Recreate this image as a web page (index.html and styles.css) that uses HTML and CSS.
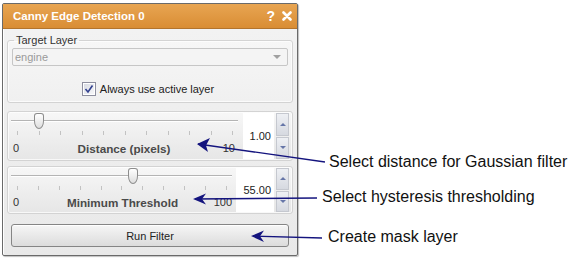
FILE: index.html
```html
<html>
	<head>
		<title>Canny Edge Detection</title>
		<link rel="stylesheet" href="styles.css">
	</head>
	<body>
		<div id="stage">
			<div class="panel">
				<div class="titlebar">
					<span class="title">Canny Edge Detection 0</span>
					<span class="tools">
						<span class="help">?</span>
						<svg class="close" width="10" height="10" viewBox="0 0 10 10">
							<path d="M1.5 1.5 L8.5 8.5 M8.5 1.5 L1.5 8.5" stroke="#ffffff" stroke-width="2.6" stroke-linecap="round"/>
						</svg>
					</span>
				</div>
				<div class="panelBody">
					<fieldset class="group target">
						<legend>Target Layer</legend>
						<div class="combo"><span>engine</span><span class="comboArrow"></span></div>
						<label class="check">
							<svg class="checkbox" width="14" height="14" viewBox="0 0 14 14">
								<defs>
									<linearGradient id="cbg" x1="0" y1="0" x2="1" y2="1">
										<stop offset="0" stop-color="#d9dbe3"/>
										<stop offset="1" stop-color="#f7f7f9"/>
									</linearGradient>
								</defs>
								<rect x="0.5" y="0.5" width="13" height="13" fill="#fff" stroke="#8e8f9f"/>
								<rect x="2" y="2" width="10" height="10" fill="url(#cbg)"/>
								<path d="M3.5 7 L6 10 L10.5 3.5" fill="none" stroke="#32418f" stroke-width="1.6"/>
							</svg>
							Always use active layer
						</label>
					</fieldset>

					<div class="group sliderGroup">
						<div class="slider">
							<div class="trackWrap">
								<div class="track"></div>
								<div class="rail"><span class="handle" style="left:10%"></span></div>
							</div>
							<div class="ticks"><i></i><i></i><i></i><i></i><i></i><i></i><i></i><i></i><i></i><i></i><i></i></div>
							<div class="scale"><span>0</span><b>Distance (pixels)</b><span class="max">10</span></div>
						</div>
						<div class="spinBox narrow">1.00</div>
						<div class="spinButtons"><span class="up"></span><span class="down"></span></div>
					</div>

					<div class="group sliderGroup second">
						<div class="slider">
							<div class="trackWrap">
								<div class="track"></div>
								<div class="rail"><span class="handle" style="left:55%"></span></div>
							</div>
							<div class="ticks"><i></i><i></i><i></i><i></i><i></i><i></i><i></i><i></i><i></i><i></i><i></i></div>
							<div class="scale"><span>0</span><b>Minimum Threshold</b><span class="max">100</span></div>
						</div>
						<div class="spinBox wide">55.00</div>
						<div class="spinButtons"><span class="up"></span><span class="down"></span></div>
					</div>

					<button class="runButton">Run Filter</button>
				</div>
			</div>

			<svg class="arrows" width="568" height="260" viewBox="0 0 568 260">
				<path d="M325 162 L198 144" stroke="#14147e" stroke-width="1.3" fill="none"/>
				<path d="M197 144 L210 138 L206 145.5 L208 152 Z" fill="#14147e"/>
				<path d="M317 198 L195 199" stroke="#14147e" stroke-width="1.3" fill="none"/>
				<path d="M193 199 L206 193.5 L202 199 L206 204.5 Z" fill="#14147e"/>
				<path d="M322 238 L253 236" stroke="#14147e" stroke-width="1.3" fill="none"/>
				<path d="M251 236 L264 230.5 L260 236.3 L264 242 Z" fill="#14147e"/>
			</svg>
			<div class="note noteDistance">Select distance for Gaussian filter</div>
			<div class="note noteThreshold">Select hysteresis thresholding</div>
			<div class="note noteMask">Create mask layer</div>
		</div>
	</body>
</html>
```

FILE: styles.css
```css
body {
	margin:0;
	background-color:#ffffff;
	font-family: "Liberation Sans", Arial, sans-serif;
	font-size:11px;
	color:#333333;
}

#stage {
	position:relative;
	width:568px;
	height:260px;
	overflow:hidden;
}

.panel {
	margin:3px 0 0 2px;
	width:294px;
	height:251px;
	border:1px solid #6a6a6a;
	border-radius:2px;
	background:linear-gradient(#f3f3f3, #e9e9e9);
	box-shadow:inset 1px 0 0 #ffffff, 1px 1px 1px rgba(0,0,0,0.25);
	display:flex;
	flex-direction:column;
}

.titlebar {
	height:24px;
	display:flex;
	align-items:center;
	justify-content:space-between;
	padding:0 5px 0 10px;
	background:linear-gradient(#e8a552, #d98d34);
	border-bottom:1px solid #b3742c;
	color:#ffffff;
	font-weight:bold;
	font-size:11.5px;
}

.tools {
	display:flex;
	align-items:center;
	gap:7px;
}

.tools .help {
	font-size:14px;
	line-height:14px;
}

.panelBody {
	flex:1;
	display:flex;
	flex-direction:column;
	padding:5px 4px 0 4px;
}

.group {
	border:1px solid #d3d3d3;
	border-radius:3px;
	background:linear-gradient(#f7f7f7, #e6e6e6);
	box-shadow:inset 0 0 0 1px rgba(255,255,255,0.7);
}

fieldset.target {
	margin:0;
	padding:1px 4px 0 4px;
	height:66px;
	background:linear-gradient(#f6f6f6, #f0f0f0);
}

fieldset.target legend {
	padding:0 2px;
	margin-left:2px;
	color:#333333;
	line-height:13px;
}

.combo {
	height:16px;
	border:1px solid #c6c6c6;
	border-radius:2px;
	background:#f4f4f4;
	display:flex;
	align-items:center;
	justify-content:space-between;
	padding:0 6px 0 2px;
	color:#9a9a9a;
}

.comboArrow {
	width:0;
	height:0;
	border-left:4px solid transparent;
	border-right:4px solid transparent;
	border-top:4px solid #a0a0a0;
}

.check {
	display:flex;
	align-items:center;
	justify-content:center;
	gap:4px;
	margin-top:16px;
	padding-right:4px;
	color:#222222;
}

.sliderGroup {
	box-sizing:border-box;
	flex-shrink:0;
	margin-top:8px;
	height:50px;
	padding:1px 3px 1px 2px;
	display:flex;
	align-items:stretch;
}

.sliderGroup.second {
	margin-top:5px;
	height:48px;
}

.slider {
	flex:1;
	display:flex;
	flex-direction:column;
}

.trackWrap {
	position:relative;
	height:18px;
	margin-left:1px;
}

.track {
	position:absolute;
	left:0;
	right:0;
	top:7px;
	height:1px;
	background:#b4b4b4;
	border-bottom:1px solid #ffffff;
}

.rail {
	position:absolute;
	left:6px;
	right:5px;
	top:0;
	bottom:0;
}

.handle {
	position:absolute;
	top:0;
	width:10px;
	height:16px;
	margin-left:-5px;
	border:1px solid #8c8c8c;
	border-radius:3px 3px 5px 5px / 3px 3px 8px 8px;
	background:linear-gradient(#ffffff, #dedede);
	box-sizing:border-box;
}

.ticks {
	display:flex;
	justify-content:space-between;
	margin:0 5px 0 7px;
	height:4px;
}

.ticks i {
	width:1px;
	background:#c2c2c2;
}

.scale {
	display:grid;
	grid-template-columns:1fr auto 1fr;
	align-items:center;
	margin-top:7px;
	padding:0 3px 0 3px;
	line-height:13px;
	color:#333333;
}

.scale .max {
	justify-self:end;
}

.scale b {
	color:#4a4a4a;
	font-size:11.7px;
}

.second .scale {
	margin-top:6px;
	padding-right:0;
}

.spinBox {
	background:#ffffff;
	display:flex;
	align-items:center;
	justify-content:flex-end;
	padding-right:3px;
	color:#222222;
}

.spinBox.narrow {
	width:28px;
	margin-left:5px;
}

.spinBox.wide {
	width:35px;
	margin-left:4px;
}

.spinButtons {
	width:13px;
	margin-left:2px;
	display:flex;
	flex-direction:column;
	gap:1px;
}

.spinButtons span {
	flex:1;
	border:1px solid #c5c8cf;
	background:linear-gradient(#eef0f4, #d6d9e0);
	display:flex;
	align-items:center;
	justify-content:center;
}

.spinButtons .up::after {
	content:"";
	border-left:3px solid transparent;
	border-right:3px solid transparent;
	border-bottom:3px solid #6676a8;
}

.spinButtons .down::after {
	content:"";
	border-left:3px solid transparent;
	border-right:3px solid transparent;
	border-top:3px solid #6676a8;
}

.runButton {
	flex-shrink:0;
	margin:10px 4px 0 4px;
	height:23px;
	border:1px solid #858585;
	border-radius:3px;
	background:linear-gradient(#f6f6f6, #dcdcdc);
	font-family:"Liberation Sans", Arial, sans-serif;
	font-size:11px;
	color:#222222;
	box-shadow:inset 0 1px 0 #ffffff;
}

.arrows {
	position:absolute;
	left:0;
	top:0;
}

.note {
	position:absolute;
	font-size:16px;
	color:#111111;
	line-height:18px;
	white-space:nowrap;
}

.noteDistance {
	left:329px;
	top:153px;
}

.noteThreshold {
	left:322px;
	top:188px;
}

.noteMask {
	left:328px;
	top:228px;
}
```
